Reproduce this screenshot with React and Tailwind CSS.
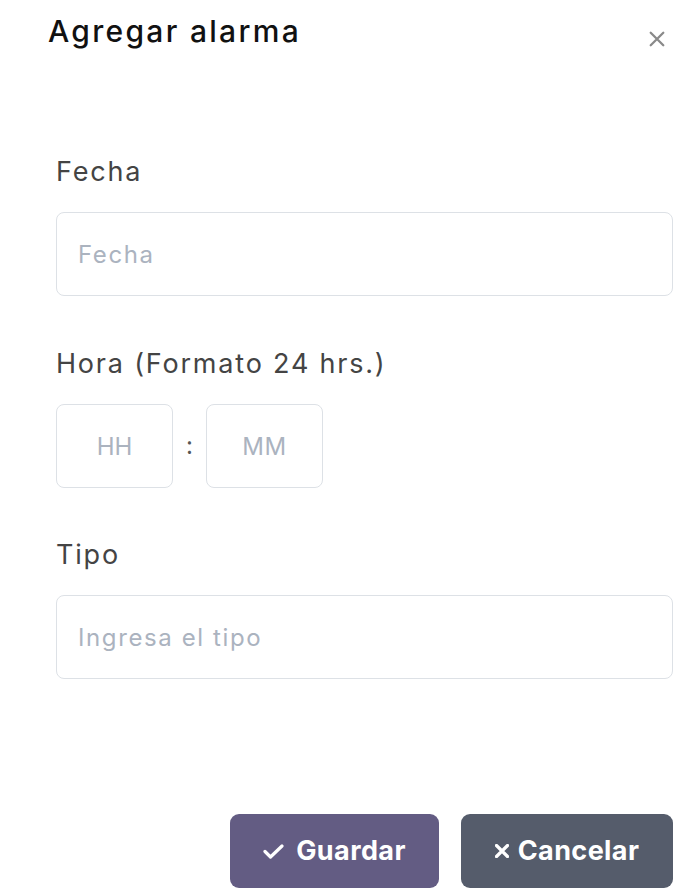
import React from 'react'

const font = { fontFamily: 'Inter, "Noto Sans", sans-serif' }

const Cross = ({ size = 14, stroke = 2, className = '' }) => (
    <svg width={size} height={size} viewBox="0 0 14 14" className={className} fill="none" stroke="currentColor" strokeWidth={stroke} strokeLinecap="round">
        <path d="M1.5 1.5l11 11M12.5 1.5l-11 11" />
    </svg>
)

const Tick = () => (
    <svg width="21" height="15" viewBox="0 0 21 15" fill="none" stroke="currentColor" strokeWidth="3.2" strokeLinecap="round" strokeLinejoin="round">
        <path d="M2 7.5l5.5 5.5L19 2" />
    </svg>
)

function Field({ label, placeholder, className = '' }) {
    return (
        <div className={className}>
            <label className="block text-[27px] leading-[32px] text-[#444] tracking-[1.8px]">{label}</label>
            <input
                className="mt-[24px] block w-[617px] h-[84px] rounded-[8px] border border-[#dde1e6] px-[21px] text-[24px] tracking-[1.6px] text-[#333] placeholder:text-[#abb3bf] outline-none"
                placeholder={placeholder}
            />
        </div>
    )
}

export default function App() {
    return (
        <div className="w-[700px] h-[896px] bg-white overflow-hidden" style={font}>
            {/* header */}
            <div className="flex justify-between items-start pl-[48px] pr-[35px] pt-[13px]">
                <h2 className="text-[30px] leading-[36px] font-medium text-[#111] tracking-[2.3px]">Agregar alarma</h2>
                <button className="mt-[18px] text-[#8a8a8a]">
                    <Cross size={16} stroke={2} />
                </button>
            </div>

            {/* body */}
            <div className="pl-[56px] mt-[107px]">
                <Field label="Fecha" placeholder="Fecha" />

                <div className="mt-[52px]">
                    <label className="block text-[27px] leading-[32px] text-[#444] tracking-[1.8px]">Hora (Formato 24 hrs.)</label>
                    <div className="mt-[24px] flex items-center">
                        <input
                            className="w-[117px] h-[84px] rounded-[8px] border border-[#dde1e6] text-center text-[24px] text-[#333] placeholder:text-[#abb3bf] outline-none"
                            placeholder="HH"
                        />
                        <span className="w-[33px] text-center text-[24px] text-[#555]">:</span>
                        <input
                            className="w-[117px] h-[84px] rounded-[8px] border border-[#dde1e6] text-center text-[24px] tracking-[0.5px] text-[#333] placeholder:text-[#abb3bf] outline-none"
                            placeholder="MM"
                        />
                    </div>
                </div>

                <Field className="mt-[51px]" label="Tipo" placeholder="Ingresa el tipo" />
            </div>

            {/* footer */}
            <div className="flex justify-end gap-[22px] pr-[27px] mt-[135px]">
                <button className="flex items-center justify-center gap-[12px] w-[209px] h-[74px] rounded-[9px] bg-[#635c83] text-white text-[27px] font-bold tracking-[0.4px]">
                    <Tick />
                    Guardar
                </button>
                <button className="flex items-center justify-center gap-[9px] w-[212px] h-[74px] rounded-[9px] bg-[#555c6b] text-white text-[27px] font-bold tracking-[0.4px]">
                    <Cross size={14} stroke={3.2} />
                    Cancelar
                </button>
            </div>
        </div>
    )
}
